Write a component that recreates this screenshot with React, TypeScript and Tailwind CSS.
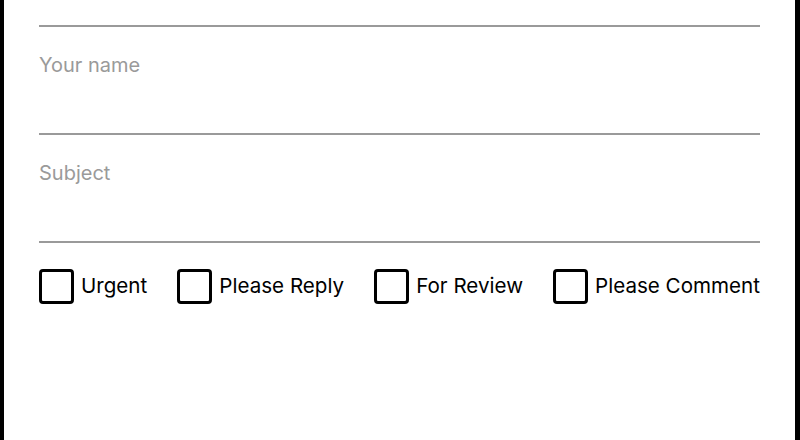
const options = ["Urgent", "Please Reply", "For Review", "Please Comment"];

const Field = ({ placeholder }: { placeholder: string }) => (
  <div className="border-b-2 border-[#9a9a9a] pt-6 pb-[54px]">
    <input
      type="text"
      placeholder={placeholder}
      className="block w-full h-7 text-[20px] leading-7 text-black placeholder:text-[#9a9a9a] outline-none bg-transparent"
    />
  </div>
);

export default function App() {
  return (
    <div
      className="h-[440px] w-[800px] overflow-hidden bg-white border-l-4 border-r-[5px] border-black px-[35px]"
      style={{ fontFamily: "Inter, 'Liberation Sans', sans-serif" }}
    >
      <div className="h-[27px] border-b-2 border-[#9a9a9a]" />
      <Field placeholder="Your name" />
      <Field placeholder="Subject" />
      <div className="flex justify-between items-center pt-[26px]">
        {options.map((o) => (
          <label key={o} className="flex items-center gap-[7px] text-[20.6px] text-black">
            <span className="block w-[35px] h-[35px] border-[3px] border-black rounded-[4px]" />
            {o}
          </label>
        ))}
      </div>
    </div>
  );
}
